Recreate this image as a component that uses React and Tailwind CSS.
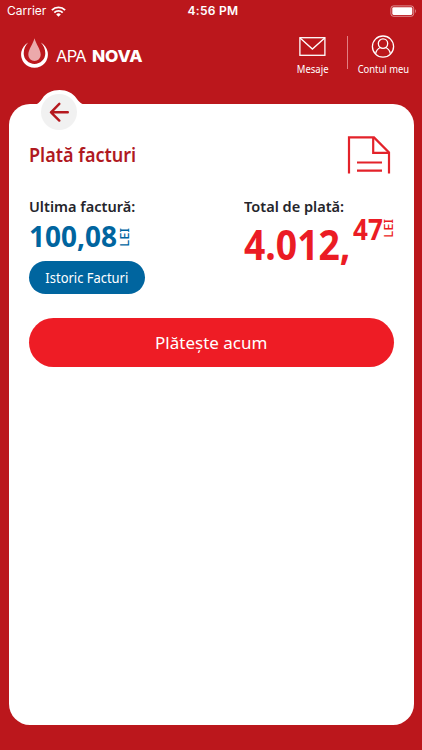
import { useState } from 'react';

const WifiIcon = () => (
  <svg width="15" height="11" viewBox="0 0 15 11" fill="none" stroke="white" strokeWidth="1.9">
    <path d="M0.9 4.1a9.4 9.4 0 0 1 13.2 0" />
    <path d="M3.3 6.6a6 6 0 0 1 8.4 0" />
    <path d="M5.2 8.4a3.3 3.3 0 0 1 4.6 0L7.5 10.8z" fill="white" stroke="none" />
  </svg>
);

const BatteryIcon = () => (
  <svg width="27" height="12" viewBox="0 0 27 12" fill="none">
    <rect x="0.9" y="0.9" width="22.8" height="10.4" rx="2.6" stroke="white" strokeOpacity="0.5" strokeWidth="1" />
    <rect x="2.3" y="2.3" width="20" height="7.6" rx="1.3" fill="white" />
    <path d="M25 4.2c1.2.5 1.2 3.2 0 3.7z" fill="white" fillOpacity="0.5" />
  </svg>
);

const LogoIcon = () => (
  <svg width="28" height="32" viewBox="0 0 28 32">
    <path
      d="M7.2 4.6A13.4 13.4 0 1 0 19.8 4.6C22.6 7.4 24.3 11.2 24.3 15.2a10.8 10.8 0 0 1-21.6 0C2.7 11.2 4.4 7.4 7.2 4.6z"
      fill="white"
    />
    <path d="M13.5 0.3C12.3 5.7 7.3 11.4 7.3 16.8a6.2 6.2 0 0 0 12.4 0C19.7 11.4 14.7 5.7 13.5 0.3z" fill="#eba9ab" />
  </svg>
);

const MailIcon = () => (
  <svg width="28" height="20" viewBox="0 0 28 20" fill="none" stroke="white" strokeWidth="1.3">
    <rect x="1.9" y="0.7" width="25" height="17.6" />
    <path d="M2.1 0.9 14.4 12.1 26.7 0.9" />
  </svg>
);

const ProfileIcon = () => (
  <svg width="24" height="24" viewBox="0 0 24 24" fill="none" stroke="white" strokeWidth="1.3">
    <circle cx="12" cy="11.6" r="10.6" />
    <circle cx="12" cy="8.6" r="4.7" />
    <path d="M4.6 18.9c.5-3.3 2-5.2 4.7-6.4M19.4 18.9c-.5-3.3-2-5.2-4.7-6.4" />
  </svg>
);

const BillIcon = () => (
  <svg width="44" height="39" viewBox="0 0 44 39" fill="none" stroke="#e3222a" strokeWidth="2.2">
    <path d="M2 38.5V2.4h25L42 17.5V38.5" />
    <path d="M26.2 2.4v15.4h15.8" />
    <path d="M10 27.5h25M10 35.7h25" />
  </svg>
);

const BackTab = ({ onBack }) => (
  <div className="absolute -top-[14px] left-[24px] w-[54px] h-[46px]">
    <svg className="absolute inset-0" width="54" height="46" viewBox="0 0 54 46">
      <path d="M0 14.6C5 14.6 6.4 12.4 9.5 8.2 13 3 19 0 26.5 0S39.6 3 43.4 8.2C46.5 12.4 48.5 14.6 54 14.6V20H0z" fill="white" />
    </svg>
    <button onClick={onBack} aria-label="Înapoi" className="absolute left-[8.5px] top-1 size-9 rounded-full bg-[#f1f1f1] flex items-center justify-center">
      <svg width="20" height="20" viewBox="0 0 20 20" fill="none" stroke="#b5191f" strokeWidth="2.4" strokeLinecap="round" strokeLinejoin="round">
        <path d="M18.8 10.3H2M10.3 1.8 2 10.3 10.3 18.6" />
      </svg>
    </button>
  </div>
);

const Lei = ({ className }) => (
  <span className={`[writing-mode:vertical-rl] rotate-180 leading-none font-medium ${className}`}>LEI</span>
);

export default function App() {
  const [page, setPage] = useState('facturi');

  return (
    <div className="w-full h-[750px] bg-[#bb171c] flex flex-col overflow-hidden whitespace-nowrap font-['Noto_Sans',sans-serif]">
      <div className="h-[22px] grid grid-cols-3 items-center pl-[7px] pr-[5px] text-white font-['Inter',sans-serif]">
        <div className="flex items-center gap-[5px]">
          <span className="text-xs">Carrier</span>
          <WifiIcon />
        </div>
        <span className="pl-0.5 text-center text-xs font-semibold tracking-[0.3px]">4:56 PM</span>
        <div className="flex justify-end"><BatteryIcon /></div>
      </div>

      <header className="h-[82px] flex justify-between pl-[21px] pr-1 text-white">
        <div className="flex items-start gap-[7px] pt-4">
          <LogoIcon />
          <div className="mt-2 flex gap-[5px] text-[16.5px] leading-5 font-['Inter',sans-serif]">
            <span className="w-[31px] tracking-[-0.7px]">APA</span>
            <span className="font-extrabold tracking-[-0.2px] origin-left scale-x-[1.05]">NOVA</span>
          </div>
        </div>
        <nav className="flex pt-[13px]">
          <button className="w-[70px] flex flex-col items-center">
            <span className="h-6 flex items-center"><MailIcon /></span>
            <span className="mt-[3px] ml-px text-[10px] leading-[14px] scale-x-[0.95]">Mesaje</span>
          </button>
          <span className="w-px h-[33px] mt-px bg-[#e27f82]" />
          <button className="w-[70px] flex flex-col items-center" onClick={() => setPage('cont')}>
            <span className="h-6 flex items-center"><ProfileIcon /></span>
            <span className="mt-[3px] text-[10px] leading-[14px] scale-x-[0.94]">Contul meu</span>
          </button>
        </nav>
      </header>

      <main data-page={page} className="relative h-[621px] ml-[8.5px] mr-[8.5px] bg-white rounded-[21px] pl-[20.5px] pr-5">
        <BackTab onBack={() => setPage('facturi')} />

        <div className="flex justify-between pt-[31px] h-[92px]">
          <h1 className="mt-[7px] text-[20px] leading-[26px] font-semibold text-[#b0191f] origin-left scale-x-[0.9]">Plată facturi</h1>
          <div className="mr-[3px]"><BillIcon /></div>
        </div>

        <div className="flex h-[122px]">
          <section className="w-[215px] shrink-0 flex flex-col items-start">
            <h2 className="text-[15px] leading-5 font-semibold text-[#25252b] origin-left scale-x-[0.97]">Ultima factură:</h2>
            <div className="flex items-start h-[45px] text-[#00659f]">
              <span className="w-[89px] text-[28px] leading-[41px] font-bold">100,08</span>
              <Lei className="text-[13px] mt-[12px]" />
            </div>
            <button className="w-[116px] h-[33px] rounded-full bg-[#00659f] text-white text-sm">
              <span className="inline-block scale-x-[0.925]">Istoric Facturi</span>
            </button>
          </section>
          <section className="shrink-0">
            <h2 className="text-[15px] leading-5 font-semibold text-[#25252b] origin-left scale-x-[0.97]">Total de plată:</h2>
            <div className="flex items-start text-[#eb1c24] font-bold">
              <span className="w-[109px] text-[41px] leading-[56px] origin-left scale-x-[0.91]">4.012,</span>
              <span className="w-[29px] text-[28px] leading-[26px] origin-left scale-x-[0.93]">47</span>
              <Lei className="text-[13px] mt-[3px]" />
            </div>
          </section>
        </div>

        <button className="w-full h-[49px] rounded-full bg-[#ee1c25] text-white text-[17px]">
          <span className="inline-block">Plătește acum</span>
        </button>
      </main>
    </div>
  );
}
